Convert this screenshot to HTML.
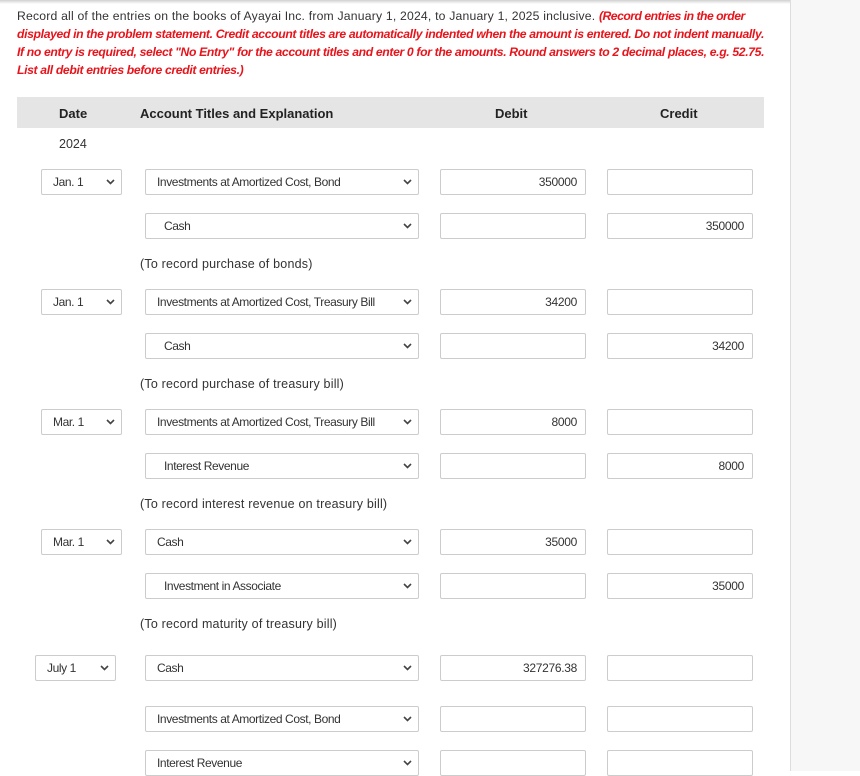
<!DOCTYPE html>
<html><head><meta charset="utf-8"><style>
*{box-sizing:border-box;margin:0;padding:0}
body{width:860px;height:771px;overflow:hidden;background:#fff;position:relative;font-family:"Liberation Sans",sans-serif;color:#333}
.side{position:absolute;left:790px;top:0;width:70px;height:771px;background:#f7f7f7;border-left:1px solid #ddd}
.shadow{position:absolute;left:0;top:0;width:860px;height:4px;background:linear-gradient(#d0d0d0,rgba(255,255,255,0))}
.intro{position:absolute;left:17px;top:7px;width:780px;font-size:12.2px;line-height:18px;letter-spacing:0.2px;white-space:nowrap}
.red{color:#e8141b;font-style:italic;font-weight:bold;letter-spacing:-0.35px}
.hdr{position:absolute;left:17px;top:97px;width:747px;height:31px;background:#e5e5e5}
.h{position:absolute;top:106px;font-size:13px;font-weight:bold;color:#222}
.yr{position:absolute;left:59px;top:137px;font-size:12.5px;color:#333}
.b{position:absolute;height:26px;border:1px solid #ccc;border-radius:2px;background:#fff;font-size:12px;letter-spacing:-0.4px;line-height:24px;color:#333}
.sel{padding-left:11px}
.sel svg{position:absolute;right:6px;top:9px}
.num{text-align:right;padding-right:8px;letter-spacing:-0.3px}
.ex{position:absolute;left:140px;font-size:12.5px;color:#333;letter-spacing:0.2px}
</style></head><body>
<div class="shadow"></div>
<div class="side"></div>
<div class="intro">Record all of the entries on the books of Ayayai Inc. from January 1, 2024, to January 1, 2025 inclusive. <span class="red" style="letter-spacing:-0.5px">(Record entries in the order</span><br><span class="red">displayed in the problem statement. Credit account titles are automatically indented when the amount is entered. Do not indent manually.</span><br><span class="red">If no entry is required, select "No Entry" for the account titles and enter 0 for the amounts. Round answers to 2 decimal places, e.g. 52.75.</span><br><span class="red">List all debit entries before credit entries.)</span></div>
<div class="hdr"></div>
<div class="h" style="left:59px">Date</div>
<div class="h" style="left:140px">Account Titles and Explanation</div>
<div class="h" style="left:495px">Debit</div>
<div class="h" style="left:660px">Credit</div>
<div class="yr">2024</div>

<div class="b sel" style="left:41px;top:169px;width:81px">Jan. 1<svg width="9" height="6"><path d="M1 1l3.5 3.5L8 1" stroke="#444" stroke-width="1.6" fill="none"/></svg></div>
<div class="b sel" style="left:145px;top:169px;width:274px">Investments at Amortized Cost, Bond<svg width="9" height="6"><path d="M1 1l3.5 3.5L8 1" stroke="#444" stroke-width="1.6" fill="none"/></svg></div>
<div class="b num" style="left:440px;top:169px;width:146px">350000</div>
<div class="b" style="left:607px;top:169px;width:146px"></div>

<div class="b sel" style="left:145px;top:213px;width:274px;padding-left:18px">Cash<svg width="9" height="6"><path d="M1 1l3.5 3.5L8 1" stroke="#444" stroke-width="1.6" fill="none"/></svg></div>
<div class="b" style="left:440px;top:213px;width:146px"></div>
<div class="b num" style="left:607px;top:213px;width:146px">350000</div>
<div class="ex" style="top:257px">(To record purchase of bonds)</div>

<div class="b sel" style="left:41px;top:289px;width:81px">Jan. 1<svg width="9" height="6"><path d="M1 1l3.5 3.5L8 1" stroke="#444" stroke-width="1.6" fill="none"/></svg></div>
<div class="b sel" style="left:145px;top:289px;width:274px">Investments at Amortized Cost, Treasury Bill<svg width="9" height="6"><path d="M1 1l3.5 3.5L8 1" stroke="#444" stroke-width="1.6" fill="none"/></svg></div>
<div class="b num" style="left:440px;top:289px;width:146px">34200</div>
<div class="b" style="left:607px;top:289px;width:146px"></div>

<div class="b sel" style="left:145px;top:333px;width:274px;padding-left:18px">Cash<svg width="9" height="6"><path d="M1 1l3.5 3.5L8 1" stroke="#444" stroke-width="1.6" fill="none"/></svg></div>
<div class="b" style="left:440px;top:333px;width:146px"></div>
<div class="b num" style="left:607px;top:333px;width:146px">34200</div>
<div class="ex" style="top:377px">(To record purchase of treasury bill)</div>

<div class="b sel" style="left:41px;top:409px;width:81px">Mar. 1<svg width="9" height="6"><path d="M1 1l3.5 3.5L8 1" stroke="#444" stroke-width="1.6" fill="none"/></svg></div>
<div class="b sel" style="left:145px;top:409px;width:274px">Investments at Amortized Cost, Treasury Bill<svg width="9" height="6"><path d="M1 1l3.5 3.5L8 1" stroke="#444" stroke-width="1.6" fill="none"/></svg></div>
<div class="b num" style="left:440px;top:409px;width:146px">8000</div>
<div class="b" style="left:607px;top:409px;width:146px"></div>

<div class="b sel" style="left:145px;top:453px;width:274px;padding-left:18px">Interest Revenue<svg width="9" height="6"><path d="M1 1l3.5 3.5L8 1" stroke="#444" stroke-width="1.6" fill="none"/></svg></div>
<div class="b" style="left:440px;top:453px;width:146px"></div>
<div class="b num" style="left:607px;top:453px;width:146px">8000</div>
<div class="ex" style="top:497px">(To record interest revenue on treasury bill)</div>

<div class="b sel" style="left:41px;top:529px;width:81px">Mar. 1<svg width="9" height="6"><path d="M1 1l3.5 3.5L8 1" stroke="#444" stroke-width="1.6" fill="none"/></svg></div>
<div class="b sel" style="left:145px;top:529px;width:274px">Cash<svg width="9" height="6"><path d="M1 1l3.5 3.5L8 1" stroke="#444" stroke-width="1.6" fill="none"/></svg></div>
<div class="b num" style="left:440px;top:529px;width:146px">35000</div>
<div class="b" style="left:607px;top:529px;width:146px"></div>

<div class="b sel" style="left:145px;top:573px;width:274px;padding-left:18px">Investment in Associate<svg width="9" height="6"><path d="M1 1l3.5 3.5L8 1" stroke="#444" stroke-width="1.6" fill="none"/></svg></div>
<div class="b" style="left:440px;top:573px;width:146px"></div>
<div class="b num" style="left:607px;top:573px;width:146px">35000</div>
<div class="ex" style="top:617px">(To record maturity of treasury bill)</div>

<div class="b sel" style="left:35px;top:655px;width:81px">July 1<svg width="9" height="6"><path d="M1 1l3.5 3.5L8 1" stroke="#444" stroke-width="1.6" fill="none"/></svg></div>
<div class="b sel" style="left:145px;top:655px;width:274px">Cash<svg width="9" height="6"><path d="M1 1l3.5 3.5L8 1" stroke="#444" stroke-width="1.6" fill="none"/></svg></div>
<div class="b num" style="left:440px;top:655px;width:146px">327276.38</div>
<div class="b" style="left:607px;top:655px;width:146px"></div>

<div class="b sel" style="left:145px;top:706px;width:274px">Investments at Amortized Cost, Bond<svg width="9" height="6"><path d="M1 1l3.5 3.5L8 1" stroke="#444" stroke-width="1.6" fill="none"/></svg></div>
<div class="b" style="left:440px;top:706px;width:146px"></div>
<div class="b" style="left:607px;top:706px;width:146px"></div>

<div class="b sel" style="left:145px;top:750px;width:274px">Interest Revenue<svg width="9" height="6"><path d="M1 1l3.5 3.5L8 1" stroke="#444" stroke-width="1.6" fill="none"/></svg></div>
<div class="b" style="left:440px;top:750px;width:146px"></div>
<div class="b" style="left:607px;top:750px;width:146px"></div>
</body></html>
